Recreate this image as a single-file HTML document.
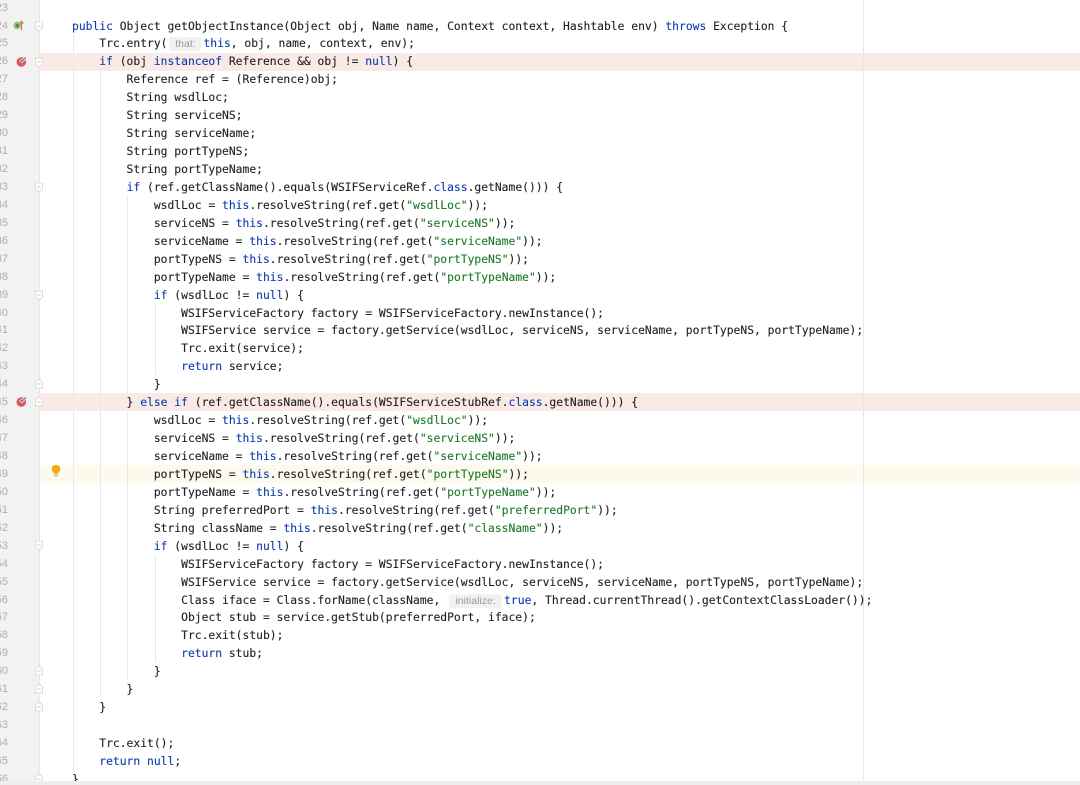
<!DOCTYPE html>
<html>
<head>
<meta charset="utf-8">
<style>
html,body{margin:0;padding:0;background:#fff;}
#p{position:relative;width:1080px;height:785px;overflow:hidden;background:#fff;}
.a{position:absolute;}
pre{margin:0;font-family:"DejaVu Sans Mono","Liberation Mono",monospace;font-size:11.33px;line-height:17.93px;color:#222;}
#code{left:72px;top:-0.4px;-webkit-text-stroke:0.12px;}
#nums{left:-12px;top:-0.4px;width:20px;text-align:right;font-family:"Liberation Sans",sans-serif;font-size:11px;color:#adadad;}
b{font-weight:normal;color:#0f3cb0;}
i{font-style:normal;color:#1d7a2a;}
.h{display:inline-block;height:14px;line-height:14px;vertical-align:0;background:#f2f2f2;border-radius:3px;color:#9a9a9a;font-family:"Liberation Sans",sans-serif;font-size:10.5px;text-align:center;box-sizing:border-box;-webkit-text-stroke:0;}
</style>
</head>
<body>
<div id="p">
<div class="a" style="left:0;top:0;width:40px;height:781px;background:#f2f2f2;"></div>
<div class="a" style="left:39px;top:0;width:1px;height:781px;background:#e6e6e6;"></div>
<div class="a" style="left:40px;top:53px;width:1040px;height:18px;background:#faeae6;"></div>
<div class="a" style="left:40px;top:393px;width:1040px;height:18px;background:#faeae6;"></div>
<div class="a" style="left:40px;top:465px;width:1040px;height:18px;background:#fcfaed;"></div>
<div class="a" style="left:863px;top:0;width:1px;height:781px;background:#e8e8e8;"></div>
<div class="a" style="left:73px;top:35px;width:1px;height:735px;background:#e9e9e9;"></div>
<div class="a" style="left:100px;top:71px;width:1px;height:627px;background:#e9e9e9;"></div>
<div class="a" style="left:127px;top:196px;width:1px;height:197px;background:#e9e9e9;"></div>
<div class="a" style="left:127px;top:411px;width:1px;height:269px;background:#e9e9e9;"></div>
<div class="a" style="left:155px;top:304px;width:1px;height:71px;background:#e9e9e9;"></div>
<div class="a" style="left:155px;top:555px;width:1px;height:107px;background:#e9e9e9;"></div>
<pre class="a" id="nums">23
24
25
26
27
28
29
30
31
32
33
34
35
36
37
38
39
40
41
42
43
44
45
46
47
48
49
50
51
52
53
54
55
56
57
58
59
60
61
62
63
64
65
66</pre>
<pre class="a" id="code"> 
<b>public</b> Object getObjectInstance(Object obj, Name name, Context context, Hashtable env) <b>throws</b> Exception {
    Trc.entry(<span class="h" style="width:32px;margin:0 2px 0 2px;">that:</span><b>this</b>, obj, name, context, env);
    <b>if</b> (obj <b>instanceof</b> Reference &amp;&amp; obj != <b>null</b>) {
        Reference ref = (Reference)obj;
        String wsdlLoc;
        String serviceNS;
        String serviceName;
        String portTypeNS;
        String portTypeName;
        <b>if</b> (ref.getClassName().equals(WSIFServiceRef.<b>class</b>.getName())) {
            wsdlLoc = <b>this</b>.resolveString(ref.get(<i>"wsdlLoc"</i>));
            serviceNS = <b>this</b>.resolveString(ref.get(<i>"serviceNS"</i>));
            serviceName = <b>this</b>.resolveString(ref.get(<i>"serviceName"</i>));
            portTypeNS = <b>this</b>.resolveString(ref.get(<i>"portTypeNS"</i>));
            portTypeName = <b>this</b>.resolveString(ref.get(<i>"portTypeName"</i>));
            <b>if</b> (wsdlLoc != <b>null</b>) {
                WSIFServiceFactory factory = WSIFServiceFactory.newInstance();
                WSIFService service = factory.getService(wsdlLoc, serviceNS, serviceName, portTypeNS, portTypeName);
                Trc.exit(service);
                <b>return</b> service;
            }
        } <b>else if</b> (ref.getClassName().equals(WSIFServiceStubRef.<b>class</b>.getName())) {
            wsdlLoc = <b>this</b>.resolveString(ref.get(<i>"wsdlLoc"</i>));
            serviceNS = <b>this</b>.resolveString(ref.get(<i>"serviceNS"</i>));
            serviceName = <b>this</b>.resolveString(ref.get(<i>"serviceName"</i>));
            portTypeNS = <b>this</b>.resolveString(ref.get(<i>"portTypeNS"</i>));
            portTypeName = <b>this</b>.resolveString(ref.get(<i>"portTypeName"</i>));
            String preferredPort = <b>this</b>.resolveString(ref.get(<i>"preferredPort"</i>));
            String className = <b>this</b>.resolveString(ref.get(<i>"className"</i>));
            <b>if</b> (wsdlLoc != <b>null</b>) {
                WSIFServiceFactory factory = WSIFServiceFactory.newInstance();
                WSIFService service = factory.getService(wsdlLoc, serviceNS, serviceName, portTypeNS, portTypeName);
                Class iface = Class.forName(className, <span class="h" style="width:53px;margin:0 2px 0 2px;">initialize:</span><b>true</b>, Thread.currentThread().getContextClassLoader());
                Object stub = service.getStub(preferredPort, iface);
                Trc.exit(stub);
                <b>return</b> stub;
            }
        }
    }

    Trc.exit();
    <b>return null</b>;
}</pre>
<svg class="a" style="left:0;top:0;" width="80" height="785" viewBox="0 0 80 785">
<defs>
<g id="fo"><path d="M-3.6 -4H3.6V2.2L0 5L-3.6 2.2Z" fill="#fff" stroke="#d2d2d2" stroke-width="0.8"/><path d="M-1.8 0H1.8" stroke="#bbb" stroke-width="0.8"/></g>
<g id="fc"><path d="M-3.6 4H3.6V-2.2L0 -5L-3.6 -2.2Z" fill="#fff" stroke="#d2d2d2" stroke-width="0.8"/><path d="M-1.8 0H1.8" stroke="#bbb" stroke-width="0.8"/></g>
<g id="bp"><circle cx="21.3" cy="1" r="4.8" fill="#db5860"/><path d="M20 -1.5L22 0.5L25.8 -3.6" fill="none" stroke="#f3f1f1" stroke-width="2.6"/><path d="M20 -1.5L22 0.5L25.8 -3.6" fill="none" stroke="#666" stroke-width="1"/></g>
</defs>
<circle cx="17.2" cy="25.5" r="3.7" fill="#84c474"/>
<rect x="16.3" y="24" width="2" height="3" fill="#3c7d3c"/>
<path d="M21.5 30.5V21.5M19.6 24L21.5 21L23.4 24" fill="none" stroke="#e0696f" stroke-width="1.1"/>
<use href="#bp" x="0" y="61"/>
<use href="#bp" x="0" y="401"/>
<use href="#fo" x="39" y="26"/>
<use href="#fo" x="39" y="62"/>
<use href="#fo" x="39" y="187"/>
<use href="#fo" x="39" y="295"/>
<use href="#fc" x="39" y="384"/>
<use href="#fc" x="39" y="402"/>
<use href="#fo" x="39" y="545"/>
<use href="#fc" x="39" y="671"/>
<use href="#fc" x="39" y="689"/>
<use href="#fc" x="39" y="707"/>
<use href="#fc" x="39" y="779"/>
<path d="M56 465C53.2 465 51.8 467 51.8 469C51.8 471 53.4 472 53.8 473.5H58.2C58.6 472 60.2 471 60.2 469C60.2 467 58.8 465 56 465Z" fill="#f4a908"/>
<path d="M53.8 474.7H58.2M54.4 476.2H57.6" stroke="#b9a98a" stroke-width="0.9" fill="none"/>
</svg>
<div class="a" style="left:0;top:781px;width:1080px;height:4px;background:#ededed;"></div>
</div>
</body>
</html>
